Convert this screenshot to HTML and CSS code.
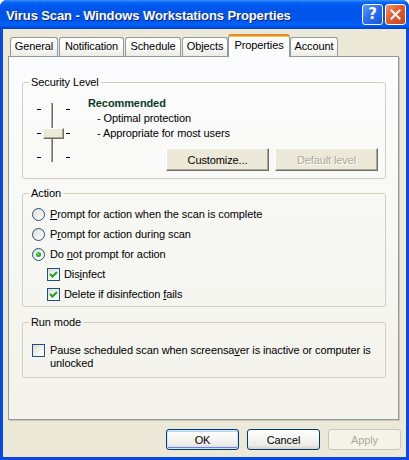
FILE: index.html
```html
<!DOCTYPE html>
<html>
<head>
<meta charset="utf-8">
<title>Virus Scan - Windows Workstations Properties</title>
<link rel="stylesheet" href="styles.css">
</head>
<body>
<div class="window">
  <div class="titlebar">
    <span class="title">Virus Scan - Windows Workstations Properties</span>
    <div class="caption-btns">
      <span class="capbtn help">?</span>
      <span class="capbtn close">
        <svg width="11" height="11" viewBox="0 0 11 11"><path d="M1.5 1.5 L9.5 9.5 M9.5 1.5 L1.5 9.5" stroke="#fff" stroke-width="2" stroke-linecap="square"/></svg>
      </span>
    </div>
  </div>
  <div class="client">
    <div class="tabs">
      <div class="tab t-general">General</div>
      <div class="tab t-notification">Notification</div>
      <div class="tab t-schedule">Schedule</div>
      <div class="tab t-objects">Objects</div>
      <div class="tab active t-properties">Properties</div>
      <div class="tab t-account">Account</div>
    </div>
    <div class="panel">
      <fieldset class="group security">
        <legend>Security Level</legend>
        <div class="sec-body">
          <div class="slider">
            <div class="ticks"><span></span><span></span><span></span></div>
            <div class="track"></div>
            <div class="ticks"><span></span><span></span><span></span></div>
            <div class="thumb"></div>
          </div>
          <div class="sec-info">
            <div class="level">Recommended</div>
            <div class="desc">- Optimal protection</div>
            <div class="desc">- Appropriate for most users</div>
            <div class="sec-btns">
              <button class="classic">Customize...</button>
              <button class="classic" disabled>Default level</button>
            </div>
          </div>
        </div>
      </fieldset>

      <fieldset class="group action">
        <legend>Action</legend>
        <div class="action-body">
          <div class="row"><span class="radio"></span><span><u>P</u>rompt for action when the scan is complete</span></div>
          <div class="row"><span class="radio"></span><span>P<u>r</u>ompt for action during scan</span></div>
          <div class="row"><span class="radio checked"></span><span>Do <u>n</u>ot prompt for action</span></div>
          <div class="row sub"><span class="check checked"><svg width="11" height="11" viewBox="0 0 11 11"><path d="M2 5 L4.5 7.5 L9 3" fill="none" stroke="#21a121" stroke-width="2"/></svg></span><span>Dis<u>i</u>nfect</span></div>
          <div class="row sub"><span class="check checked"><svg width="11" height="11" viewBox="0 0 11 11"><path d="M2 5 L4.5 7.5 L9 3" fill="none" stroke="#21a121" stroke-width="2"/></svg></span><span>Delete if disinfection <u>f</u>ails</span></div>
        </div>
      </fieldset>

      <fieldset class="group runmode">
        <legend>Run mode</legend>
        <div class="run-body">
          <span class="check"></span>
          <span class="run-label">Pause scheduled scan when screensa<u>v</u>er is inactive or computer is<br>unlocked</span>
        </div>
      </fieldset>
    </div>
    <div class="footer">
      <button class="xp default">OK</button>
      <button class="xp">Cancel</button>
      <button class="xp" disabled>Apply</button>
    </div>
  </div>
</div>
</body>
</html>
```
FILE: styles.css
```css
* { box-sizing: border-box; }
html, body { margin: 0; padding: 0; }
body {
  width: 409px;
  height: 460px;
  overflow: hidden;
  background: #ffffff;
  font-family: "Liberation Sans", Arial, sans-serif;
  font-size: 11px;
  letter-spacing: -0.1px;
  color: #000;
}
.window {
  width: 409px;
  height: 460px;
  display: flex;
  flex-direction: column;
  border-radius: 7px 7px 0 0;
  overflow: hidden;
  background: #0a4ae0;
}
.titlebar {
  height: 29px;
  flex: none;
  display: flex;
  align-items: flex-start;
  padding: 0 3px 0 6px;
  background: linear-gradient(180deg, #3d95ff 0px, #0a6bf6 2px, #0058ee 5px, #0054e8 12px, #0056ec 20px, #0062f7 25px, #0050e0 27px, #0040c8 29px);
}
.title {
  flex: 1;
  margin-top: 8px;
  font: bold 13px/15px "Liberation Sans", Arial, sans-serif;
  letter-spacing: -0.1px;
  color: #fff;
  white-space: nowrap;
  text-shadow: 1px 1px 0 #0a1e8c;
}
.caption-btns {
  display: flex;
  gap: 2px;
  margin-top: 4px;
}
.capbtn {
  width: 21px;
  height: 21px;
  border: 1px solid #fff;
  border-radius: 3px;
  display: flex;
  align-items: center;
  justify-content: center;
}
.help {
  background: linear-gradient(135deg, #5e9bff 0%, #2d6ff0 45%, #1a55dc 100%);
  color: #fff;
  font: bold 15px/1 "DejaVu Sans", sans-serif;
}
.close {
  background: linear-gradient(135deg, #f19574 0%, #e3602f 40%, #c8431c 100%);
}

.client {
  flex: 1;
  margin: 0 3px 3px;
  background: #ece9d8;
  display: flex;
  flex-direction: column;
  padding: 0 5px;
}
.tabs {
  height: 27px;
  flex: none;
  display: flex;
  align-items: flex-end;
  padding-left: 2px;
}
.tab {
  height: 19px;
  margin-right: 1px;
  border: 1px solid #919b9c;
  border-bottom: none;
  border-radius: 3px 3px 0 0;
  background: linear-gradient(180deg, #ffffff 0%, #fcfcfb 45%, #ecebe5 100%);
  text-align: center;
  line-height: 17px;
  white-space: nowrap;
}
.t-general { width: 48px; }
.t-notification { width: 65px; }
.t-schedule { width: 56px; }
.t-objects { width: 46px; }
.t-properties { width: 62px; }
.t-account { width: 48px; }
.tab.active {
  position: relative;
  z-index: 1;
  height: 23px;
  margin: 0 0 -1px -1px;
  border-top: 2px solid #e68b2c;
  box-shadow: inset 0 1px 0 #ffc83c;
  background: #fcfcfe;
  line-height: 18px;
}

.panel {
  height: 364px;
  width: 391px;
  flex: none;
  border: 1px solid #919b9c;
  box-shadow: 1px 1px 0 #c9c6b6;
  background: linear-gradient(180deg, #fcfcfe 0%, #f7f7f3 50%, #f3f2ec 100%);
  padding: 19px 0 0 13px;
}

.group {
  width: 364px;
  margin: 0;
  padding: 0;
  min-width: 0;
  border: 1px solid #d0d0bf;
  border-radius: 3px;
}
.group legend {
  margin-left: 6px;
  padding: 0 2px;
  line-height: 13px;
}
.action { margin-top: 8px; }
.runmode { margin-top: 9px; }

.sec-body {
  display: flex;
  padding: 7px 0 0 0;
}
.slider {
  position: relative;
  display: flex;
  height: 59px;
  margin: 7px 0 0 14px;
}
.ticks {
  width: 4px;
  display: flex;
  flex-direction: column;
  justify-content: space-between;
  padding: 6px 0 4px;
}
.ticks span {
  display: block;
  height: 1px;
  background: #000;
}
.track {
  width: 3px;
  margin: 0 12px 0 10px;
  background: linear-gradient(90deg, #aca899 0 1px, #716f64 1px 2px, #ffffff 2px 3px);
}
.thumb {
  position: absolute;
  left: 6px;
  top: 25px;
  width: 21px;
  height: 11px;
  background: #ece9d8;
  border: 1px solid;
  border-color: #ffffff #716f64 #716f64 #ffffff;
  box-shadow: inset -1px -1px 0 #aca899;
}
.sec-info {
  flex: 1;
  margin-left: 18px;
  padding: 0 7px 7px 0;
  line-height: 15px;
}
.level {
  font-weight: bold;
  color: #0b3a24;
}
.desc { padding-left: 9px; }
.sec-btns {
  display: flex;
  justify-content: flex-end;
  gap: 6px;
  margin-top: 7px;
}
button {
  font-family: inherit;
  font-size: 11px;
  letter-spacing: -0.1px;
  color: #000;
  padding: 0;
  margin: 0;
}
.classic {
  width: 103px;
  height: 23px;
  background: #ece9d8;
  border: 1px solid;
  border-color: #ffffff #716f64 #716f64 #ffffff;
  box-shadow: inset -1px -1px 0 #aca899;
  border-radius: 0;
}
.classic:disabled {
  color: #aca899;
  text-shadow: 1px 1px 0 #ffffff;
}

.action-body {
  padding: 4px 0 2px 9px;
}
.row {
  height: 20px;
  display: flex;
  align-items: center;
}
.row.sub { padding-left: 15px; }
.radio {
  width: 13px;
  height: 13px;
  flex: none;
  margin-right: 5px;
  border: 1px solid #1c5180;
  border-radius: 50%;
  background: linear-gradient(135deg, #dcdcd7 0%, #f0f0ea 50%, #ffffff 100%);
  display: flex;
  align-items: center;
  justify-content: center;
}
.radio.checked::after {
  content: "";
  width: 5px;
  height: 5px;
  border-radius: 50%;
  background: radial-gradient(circle at 35% 35%, #66d766 0%, #21a121 70%, #1a7c1a 100%);
}
.check {
  width: 13px;
  height: 13px;
  flex: none;
  margin-right: 5px;
  border: 1px solid #1c5180;
  background: linear-gradient(135deg, #dcdcd7 0%, #f0f0ea 50%, #ffffff 100%);
  display: flex;
  align-items: center;
  justify-content: center;
}
.row.sub .check { margin-right: 4px; }

.run-body {
  display: flex;
  align-items: flex-start;
  padding: 15px 0 7px 9px;
}
.run-label { line-height: 13px; }

.footer {
  flex: 1;
  display: flex;
  justify-content: flex-end;
  align-items: flex-start;
  gap: 8px;
  padding-top: 9px;
}
.xp {
  width: 73px;
  height: 21px;
  border: 1px solid #003c74;
  border-radius: 3px;
  background: linear-gradient(180deg, #ffffff 0%, #f7f7f4 40%, #ecebe6 80%, #d6d0c5 100%);
}
.xp.default {
  box-shadow: inset 0 0 0 1px #cee7ff, inset 0 -1px 0 1px #6982ee, inset 0 1px 0 1px #b9d1fa;
}
.xp:disabled {
  border-color: #c9c7ba;
  background: #f5f4ea;
  color: #aca899;
}
```
